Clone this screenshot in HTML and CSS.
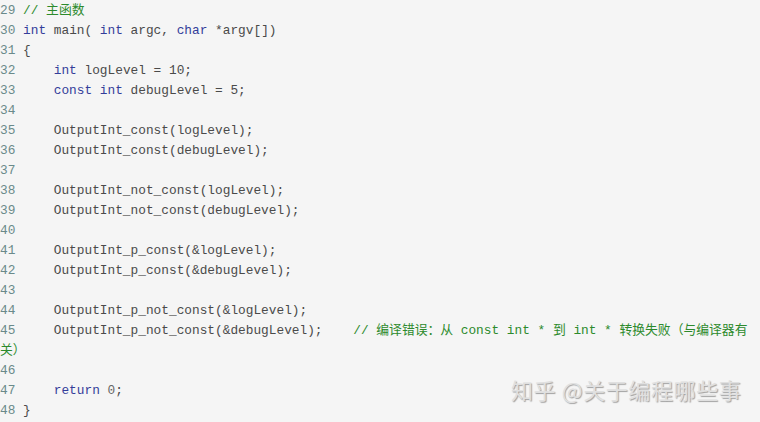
FILE: index.html
```html
<!DOCTYPE html>
<html>
<head>
<meta charset="utf-8">
<link rel="stylesheet" href="styles.css">
</head>
<body>
<div class="code">
<div class="ln"><span class="no">29</span> <span class="cm">// 主函数</span></div>
<div class="ln"><span class="no">30</span> <span class="kw">int</span> main( <span class="kw">int</span> argc, <span class="kw">char</span> *argv[])</div>
<div class="ln"><span class="no">31</span> {</div>
<div class="ln"><span class="no">32</span>     <span class="kw">int</span> logLevel = 10;</div>
<div class="ln"><span class="no">33</span>     <span class="kw">const</span> <span class="kw">int</span> debugLevel = 5;</div>
<div class="ln"><span class="no">34</span></div>
<div class="ln"><span class="no">35</span>     OutputInt_const(logLevel);</div>
<div class="ln"><span class="no">36</span>     OutputInt_const(debugLevel);</div>
<div class="ln"><span class="no">37</span></div>
<div class="ln"><span class="no">38</span>     OutputInt_not_const(logLevel);</div>
<div class="ln"><span class="no">39</span>     OutputInt_not_const(debugLevel);</div>
<div class="ln"><span class="no">40</span></div>
<div class="ln"><span class="no">41</span>     OutputInt_p_const(&amp;logLevel);</div>
<div class="ln"><span class="no">42</span>     OutputInt_p_const(&amp;debugLevel);</div>
<div class="ln"><span class="no">43</span></div>
<div class="ln"><span class="no">44</span>     OutputInt_p_not_const(&amp;logLevel);</div>
<div class="ln"><span class="no">45</span>     OutputInt_p_not_const(&amp;debugLevel);    <span class="cm">// 编译错误：从 const int * 到 int * 转换失败（与编译器有<br>关）</span></div>
<div class="ln"><span class="no">46</span></div>
<div class="ln"><span class="no">47</span>     <span class="kw">return</span> <span class="num">0</span>;</div>
<div class="ln"><span class="no">48</span> }</div>
</div>
<div class="wm">知乎 @关于编程哪些事</div>
</body>
</html>
```
FILE: styles.css
```css
html, body {
  margin: 0;
  padding: 0;
  background: #f5f5f5;
}
body {
  width: 760px;
  height: 422px;
  overflow: hidden;
  position: relative;
}
.code {
  font-family: "Liberation Mono", "Noto Sans CJK SC", monospace;
  font-size: 12.8px;
  line-height: 20px;
  color: #4a4a4a;
  padding-top: 1px;
}
.ln {
  white-space: pre;
  min-height: 20px;
}
.no {
  color: #6a8a8a;
}
.kw {
  color: #333d9a;
}
.cm {
  color: #2c8a2c;
}
.num {
  color: #666;
}
.wm {
  position: absolute;
  left: 511px;
  top: 374px;
  font-family: "Noto Sans CJK SC", sans-serif;
  font-size: 22px;
  line-height: 30px;
  color: #e0e0e0;
  text-shadow: 1px 1px 1px #a0a0a0;
  letter-spacing: 0.6px;
}
```
